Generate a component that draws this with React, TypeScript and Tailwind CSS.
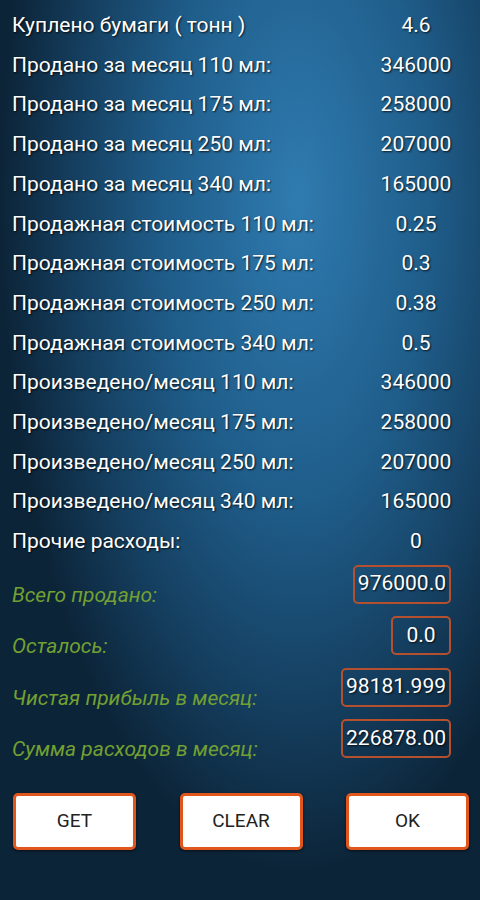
import React from 'react';

const ROWS: [string, string][] = [
  ['Куплено бумаги ( тонн )', '4.6'],
  ['Продано за месяц 110 мл:', '346000'],
  ['Продано за месяц 175 мл:', '258000'],
  ['Продано за месяц 250 мл:', '207000'],
  ['Продано за месяц 340 мл:', '165000'],
  ['Продажная стоимость 110 мл:', '0.25'],
  ['Продажная стоимость 175 мл:', '0.3'],
  ['Продажная стоимость 250 мл:', '0.38'],
  ['Продажная стоимость 340 мл:', '0.5'],
  ['Произведено/месяц 110 мл:', '346000'],
  ['Произведено/месяц 175 мл:', '258000'],
  ['Произведено/месяц 250 мл:', '207000'],
  ['Произведено/месяц 340 мл:', '165000'],
  ['Прочие расходы:', '0'],
];

const TOTALS: [string, string][] = [
  ['Всего продано:', '976000.0'],
  ['Осталось:', '0.0'],
  ['Чистая прибыль в месяц:', '98181.999'],
  ['Сумма расходов в месяц:', '226878.00'],
];

export default function App() {
  return (
    <div className="w-[480px] h-[900px] overflow-hidden font-['Roboto',sans-serif] bg-[radial-gradient(ellipse_62%_75%_at_62%_22%,#2f7bb0_0%,#1f5d8a_45%,#153f60_75%,#0c2438_100%)]">
      {/* plain rows */}
      <div className="pt-[6px]">
        {ROWS.map(([label, value], i) => (
          <div key={i} className="h-[39.7px] flex items-center">
            <span className="pl-[12px] flex-1 text-white text-[21px] [text-shadow:1px_1px_2px_rgba(0,0,0,0.8)]">
              {label}
            </span>
            <span className="w-[100px] mr-[14px] text-center text-white text-[21px] [text-shadow:1px_1px_2px_rgba(0,0,0,0.8)]">
              {value}
            </span>
          </div>
        ))}
      </div>

      {/* boxed totals */}
      <div className="pt-[3px]">
        {TOTALS.map(([label, value], i) => (
          <div key={i} className="h-[51.5px] flex items-start pr-[29px]">
            <span className="pl-[12px] pt-[15px] flex-1 italic text-[#72a032] text-[21px]">
              {label}
            </span>
            <span className="h-[39px] min-w-[60px] px-[3px] flex items-center justify-center border-2 border-[#b4502e] rounded-[5px] text-white text-[21px] [text-shadow:1px_1px_2px_rgba(0,0,0,0.8)]">
              {value}
            </span>
          </div>
        ))}
      </div>

      {/* buttons */}
      <div className="flex justify-between pl-[13px] pr-[11px] mt-[22px]">
        {['GET', 'CLEAR', 'OK'].map((b) => (
          <button
            key={b}
            className="w-[123px] h-[57px] bg-white border-[3px] border-[#e0561c] rounded-[5px] text-[#222] text-[19px] font-normal shadow-[0_1px_3px_rgba(0,0,0,0.6)]"
          >
            {b}
          </button>
        ))}
      </div>
    </div>
  );
}
